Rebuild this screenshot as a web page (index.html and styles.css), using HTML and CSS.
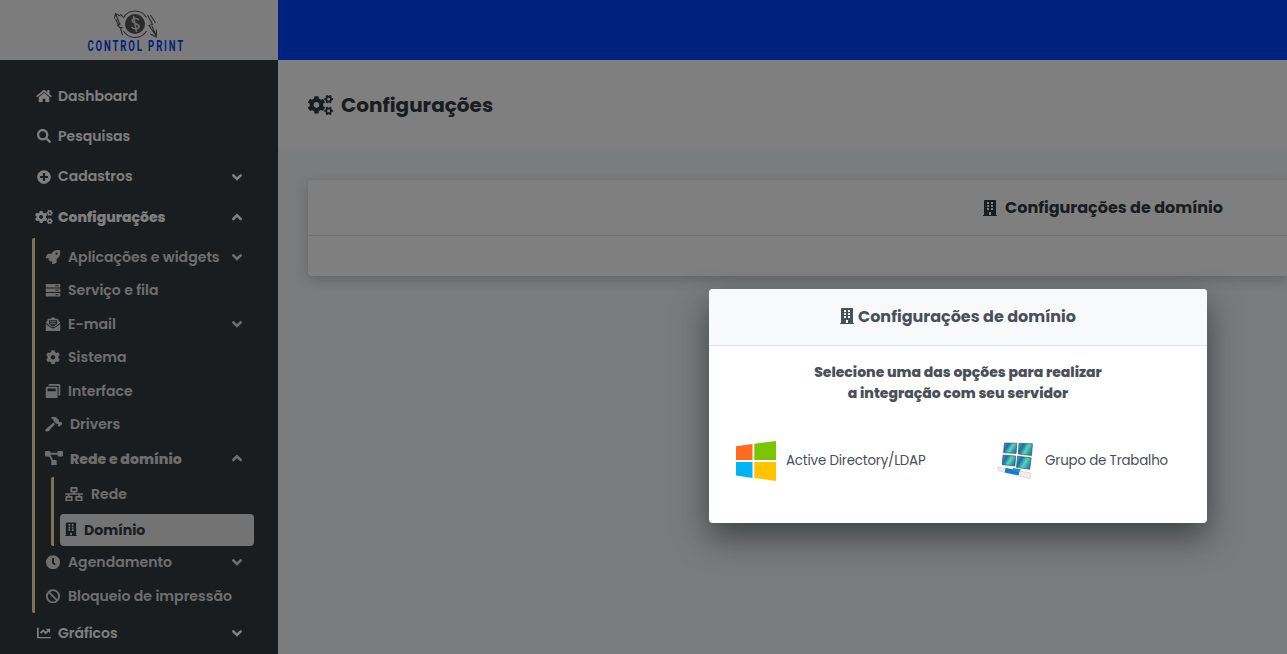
FILE: index.html
```html
<!DOCTYPE html>
<html lang="pt-BR">
<head>
<meta charset="utf-8">
<title>Control Print - Configurações de domínio</title>
<link rel="stylesheet" href="styles.css">
</head>
<body>
<svg class="defs" aria-hidden="true">
  <symbol id="home" viewBox="0 0 576 512"><path d="M280.37 148.26L96 300.11V464a16 16 0 0 0 16 16l112.06-.29a16 16 0 0 0 15.92-16V368a16 16 0 0 1 16-16h64a16 16 0 0 1 16 16v95.64a16 16 0 0 0 16 16.05L464 480a16 16 0 0 0 16-16V300L295.67 148.26a12.19 12.19 0 0 0-15.3 0zM571.6 251.47L488 182.56V44.05a12 12 0 0 0-12-12h-56a12 12 0 0 0-12 12v72.61L318.47 43a48 48 0 0 0-61 0L4.34 251.47a12 12 0 0 0-1.6 16.9l25.5 31A12 12 0 0 0 45.15 301l235.22-193.74a12.19 12.19 0 0 1 15.3 0L530.9 301a12 12 0 0 0 16.9-1.6l25.5-31a12 12 0 0 0-1.7-16.93z"/></symbol>
  <symbol id="search" viewBox="0 0 512 512"><path d="M505 442.7L405.3 343c-4.5-4.5-10.6-7-17-7H372c27.6-35.3 44-79.7 44-128C416 93.1 322.9 0 208 0S0 93.1 0 208s93.1 208 208 208c48.3 0 92.7-16.4 128-44v16.3c0 6.4 2.5 12.5 7 17l99.7 99.7c9.4 9.4 24.6 9.4 33.9 0l28.3-28.3c9.4-9.4 9.4-24.6.1-34zM208 336c-70.7 0-128-57.2-128-128 0-70.7 57.2-128 128-128 70.7 0 128 57.2 128 128 0 70.7-57.2 128-128 128z"/></symbol>
  <symbol id="plus" viewBox="0 0 512 512"><path d="M256 8C119 8 8 119 8 256s111 248 248 248 248-111 248-248S393 8 256 8zm144 276c0 6.6-5.4 12-12 12h-92v92c0 6.6-5.4 12-12 12h-56c-6.6 0-12-5.4-12-12v-92h-92c-6.6 0-12-5.4-12-12v-56c0-6.6 5.4-12 12-12h92v-92c0-6.6 5.4-12 12-12h56c6.6 0 12 5.4 12 12v92h92c6.6 0 12 5.4 12 12v56z"/></symbol>
  <path id="small-gear" d="M512.1 191l-8.2 14.3c-3 5.3-9.4 7.5-15.1 5.4-11.8-4.4-22.6-10.7-32.1-18.6-4.6-3.8-5.8-10.5-2.8-15.7l8.2-14.3c-6.9-8-12.3-17.3-15.9-27.4h-16.5c-6 0-11.2-4.3-12.2-10.3-2-12-2.1-24.6 0-37.1 1-6 6.2-10.4 12.2-10.4h16.5c3.6-10.1 9-19.4 15.9-27.4l-8.2-14.3c-3-5.2-1.9-11.9 2.8-15.7 9.5-7.9 20.4-14.2 32.1-18.6 5.7-2.1 12.1.1 15.1 5.4l8.2 14.3c10.5-1.9 21.2-1.9 31.7 0L552 6.3c3-5.3 9.4-7.5 15.1-5.4 11.8 4.4 22.6 10.7 32.1 18.6 4.6 3.8 5.8 10.5 2.8 15.7l-8.2 14.3c6.9 8 12.3 17.3 15.9 27.4h16.5c6 0 11.2 4.3 12.2 10.3 2 12 2.1 24.6 0 37.1-1 6-6.2 10.4-12.2 10.4h-16.5c-3.6 10.1-9 19.4-15.9 27.4l8.2 14.3c3 5.2 1.9 11.9-2.8 15.7-9.5 7.9-20.4 14.2-32.1 18.6-5.7 2.1-12.1-.1-15.1-5.4l-8.2-14.3c-10.4 1.9-21.2 1.9-31.7 0zm-10.5-58.8c38.5 29.6 82.4-14.3 52.8-52.8-38.5-29.7-82.4 14.3-52.8 52.8z"/>
  <symbol id="cogs" viewBox="0 0 640 512"><use href="#small-gear"/><use href="#small-gear" y="301"/><path d="M386.3 286.1l33.7 16.8c10.1 5.8 14.5 18.1 10.5 29.1-8.9 24.2-26.4 46.4-42.6 65.8-7.4 8.9-20.2 11.1-30.3 5.3l-29.1-16.8c-16 13.7-34.6 24.6-54.9 31.7v33.6c0 11.6-8.3 21.6-19.7 23.6-24.6 4.2-50.4 4.4-75.9 0-11.5-2-20-11.9-20-23.6V418c-20.3-7.2-38.9-18-54.9-31.7L74 403c-10 5.8-22.9 3.6-30.3-5.3-16.2-19.4-33.3-41.6-42.2-65.7-4-10.9.4-23.2 10.5-29.1l33.3-16.8c-3.9-20.9-3.9-42.4 0-63.4L12 205.8c-10.1-5.8-14.6-18.1-10.5-29 8.9-24.2 26-46.4 42.2-65.8 7.4-8.9 20.2-11.1 30.3-5.3l29.1 16.8c16-13.7 34.6-24.6 54.9-31.7V57.1c0-11.5 8.2-21.5 19.6-23.5 24.6-4.2 50.5-4.4 76-.1 11.5 2 20 11.9 20 23.6v33.6c20.3 7.2 38.9 18 54.9 31.7l29.1-16.8c10-5.8 22.9-3.6 30.3 5.3 16.2 19.4 33.2 41.6 42.1 65.8 4 10.9.1 23.2-10 29.1l-33.7 16.8c3.9 21 3.9 42.5 0 63.5zm-117.6 21.1c59.2-77-28.7-164.9-105.7-105.7-59.2 77 28.7 164.9 105.7 105.7z"/></symbol>
  <symbol id="cog" viewBox="0 0 512 512"><path d="M487.4 315.7l-42.6-24.6c4.3-23.2 4.3-47 0-70.2l42.6-24.6c4.9-2.8 7.1-8.6 5.5-14-11.1-35.6-30-67.8-54.7-94.6-3.8-4.1-10-5.1-14.8-2.3L380.8 110c-17.9-15.4-38.5-27.3-60.8-35.1V25.8c0-5.6-3.9-10.5-9.4-11.7-36.7-8.2-74.3-7.8-109.2 0-5.5 1.2-9.4 6.1-9.4 11.7V75c-22.2 7.9-42.8 19.8-60.8 35.1L88.7 85.5c-4.9-2.8-11-1.9-14.8 2.3-24.7 26.7-43.6 58.9-54.7 94.6-1.7 5.4.6 11.2 5.5 14L67.3 221c-4.3 23.2-4.3 47 0 70.2l-42.6 24.6c-4.9 2.8-7.1 8.6-5.5 14 11.1 35.6 30 67.8 54.7 94.6 3.8 4.1 10 5.1 14.8 2.3l42.6-24.6c17.9 15.4 38.5 27.3 60.8 35.1v49.2c0 5.6 3.9 10.5 9.4 11.7 36.7 8.2 74.3 7.8 109.2 0 5.5-1.2 9.4-6.1 9.4-11.7v-49.2c22.2-7.9 42.8-19.8 60.8-35.1l42.6 24.6c4.9 2.8 11 1.9 14.8-2.3 24.7-26.7 43.6-58.9 54.7-94.6 1.5-5.5-.7-11.3-5.6-14.1zM256 336c-44.1 0-80-35.9-80-80s35.9-80 80-80 80 35.9 80 80-35.9 80-80 80z"/></symbol>
  <symbol id="rocket" viewBox="0 0 512 512"><path d="M505.12 19.09c-1.19-5.53-6.66-11-12.21-12.19C460.72 0 435.51 0 410.41 0 307.18 0 245.27 55.2 199.05 128H94.84c-16.35 0-35.56 11.87-42.89 26.48L2.52 253.3A28.4 28.4 0 0 0 0 264a24 24 0 0 0 24 24h103.82l-22.48 22.47c-11.36 11.36-13 32.26 0 45.25l50.9 50.9c11.16 11.19 32.16 13.16 45.28 0L224 384.16V488a24 24 0 0 0 24 24 28.56 28.56 0 0 0 10.7-2.52l98.73-49.39c14.63-7.29 26.51-26.5 26.51-42.86V312.8C456.54 266.5 512 204.4 512 101.7c0-25.2 0-50.4-6.88-82.61zM384 168a40 40 0 1 1 40-40 40 40 0 0 1-40 40z"/></symbol>
  <symbol id="server" viewBox="0 0 512 512"><path fill-rule="evenodd" d="M24 32H488a24 24 0 0 1 24 24v80a24 24 0 0 1-24 24H24a24 24 0 0 1-24-24V56a24 24 0 0 1 24-24zM24 192H488a24 24 0 0 1 24 24v80a24 24 0 0 1-24 24H24a24 24 0 0 1-24-24v-80a24 24 0 0 1 24-24zM24 352H488a24 24 0 0 1 24 24v80a24 24 0 0 1-24 24H24a24 24 0 0 1-24-24v-80a24 24 0 0 1 24-24zM344 80h104v32H344zM344 240h104v32H344zM344 400h104v32H344z"/></symbol>
  <symbol id="mail" viewBox="0 0 512 512"><path d="M0 250l176 124q80 58 160 0l176-124v214a48 48 0 0 1-48 48H48a48 48 0 0 1-48-48z"/><path fill-rule="evenodd" d="M0 206q0-26 20-42l44-34V96a32 32 0 0 1 32-32h72l44-36q44-32 88 0l44 36h72a32 32 0 0 1 32 32v34l44 34q20 16 20 42L336 334q-80 58-160 0zM118 118v128l84 62q54 38 108 0l84-62V118z"/><path d="M160 150h192v36H160zM160 220h192v36H160z"/></symbol>
  <symbol id="windows" viewBox="0 0 512 512"><path fill-rule="evenodd" d="M48 96h320a48 48 0 0 1 48 48v320a48 48 0 0 1-48 48H48a48 48 0 0 1-48-48V144a48 48 0 0 1 48-48zM64 160v96h288v-96z"/><path d="M464 0H144a48 48 0 0 0-48 48v16h64v-4h292v292h-4v64h16a48 48 0 0 0 48-48V48a48 48 0 0 0-48-48z"/></symbol>
  <symbol id="hammer" viewBox="0 0 576 512"><path d="M571 193l-23-22c-9-9-24-9-34 0l-11 11-24-23c8-26 3-48-14-66L409 36C346-24 247-24 190 38l98 49v20c0 25 10 50 28 68l54 54c21 16 42 20 69 14l23 22-12 12c-9 9-9 24 0 34l23 22c9 9 24 9 34 0l91-91c9-9 9-24 0-34zM304 210c-5-5-8-11-12-17L20 428c-26 23-27 63-2 88 25 24 65 22 88-4l236-265c-6-4-10-7-15-12z"/></symbol>
  <symbol id="diagram" viewBox="0 0 640 512"><path d="M32 0h128a32 32 0 0 1 32 32v32h256V32a32 32 0 0 1 32-32h128a32 32 0 0 1 32 32v128a32 32 0 0 1-32 32H480a32 32 0 0 1-32-32v-32H192v20l98 172h94a32 32 0 0 1 32 32v128a32 32 0 0 1-32 32H256a32 32 0 0 1-32-32V352l1-18-82-142H32a32 32 0 0 1-32-32V32A32 32 0 0 1 32 0z"/></symbol>
  <symbol id="network" viewBox="0 0 640 512"><path fill-rule="evenodd" d="M224 0h192a32 32 0 0 1 32 32v128a32 32 0 0 1-32 32h-64v32h272a16 16 0 0 1 16 16v32H544v48h48a32 32 0 0 1 32 32v128a32 32 0 0 1-32 32H400a32 32 0 0 1-32-32V352a32 32 0 0 1 32-32h80v-48H160v48h80a32 32 0 0 1 32 32v128a32 32 0 0 1-32 32H48a32 32 0 0 1-32-32V352a32 32 0 0 1 32-32h48v-48H0v-32a16 16 0 0 1 16-16h272v-32h-64a32 32 0 0 1-32-32V32a32 32 0 0 1 32-32zM256 64v64h128V64zM80 384v64h128v-64zM432 384v64h128v-64z"/></symbol>
  <symbol id="building" viewBox="0 0 448 512"><path fill-rule="evenodd" d="M56 0h336a24 24 0 0 1 24 24v456h12a20 20 0 0 1 20 20v12H0v-12a20 20 0 0 1 20-20h12V24A24 24 0 0 1 56 0zM128 64v64h64V64zM256 64v64h64V64zM128 160v64h64v-64zM256 160v64h64v-64zM128 256v64h64v-64zM256 256v64h64v-64zM192 384v96h64v-96z"/></symbol>
  <symbol id="clock" viewBox="0 0 512 512"><path fill-rule="evenodd" d="M256 8a248 248 0 1 0 0 496 248 248 0 1 0 0-496zM224 104h64v164l64 48-36 50-92-68z"/></symbol>
  <symbol id="ban" viewBox="0 0 512 512"><g fill="none" stroke="currentColor" stroke-width="66"><circle cx="256" cy="256" r="215"/><path d="M104 104l304 304"/></g></symbol>
  <symbol id="chart" viewBox="0 0 512 512"><path d="M64 64v336h432a16 16 0 0 1 16 16v32H32a32 32 0 0 1-32-32V80a16 16 0 0 1 16-16zM352 96h112a16 16 0 0 1 16 16v112c0 18-20 24-30 14l-32-30-100 96-94-94-74 72-44-44 118-118 94 94 56-56-32-32c-10-10-6-30 10-30z"/></symbol>
  <symbol id="down" viewBox="0 0 12 12"><path d="M2.300 4.300L6 8l3.700-3.700" fill="none" stroke="currentColor" stroke-width="2.600" stroke-linecap="round"/></symbol>
  <symbol id="up" viewBox="0 0 12 12"><path d="M2.300 8L6 4.300 9.700 8" fill="none" stroke="currentColor" stroke-width="2.600" stroke-linecap="round"/></symbol>
</svg>

<div class="app">
  <aside class="sidebar">
    <a class="brand">
      <svg class="logo" viewBox="0 0 100 46" role="img" aria-label="Control Print">
        <g fill="none" stroke="#565656" stroke-width="1.100">
          <path d="M37.500 9.500A13.500 13.500 0 0 1 60.500 9.500M37.500 23A13.500 13.500 0 0 0 60.500 23"/>
          <path d="M28.500 10.500L29.500 5.500 34.500 8M29.800 6L34 17M31 18l3.500-2.500M29.500 11l4 8.500h3l-2 1 2 6.500M34.500 6l3.500 4M61.500 7l5 9.500-3.500 1 7.500 11M64.500 7l5 8M66 18l4.500 10.500M70.500 21.500l-.200 7.500-6-3"/>
        </g>
        <circle cx="49" cy="16" r="10" fill="#555"/>
        <path d="M53 12.200c-1.500-2.600-7.200-2.200-6.700.9.500 2.500 6.500 2.300 6.800 5.200.2 3-5.800 3.500-7.500.5M47.500 8l3 16" fill="none" stroke="#ddd" stroke-width="1.500"/>
        <text class="logo-text" transform="translate(1.500 42.500) scale(.66 1)" textLength="145" lengthAdjust="spacing">CONTROL PRINT</text>
      </svg>
    </a>
    <nav class="menu">
      <a class="item"><svg class="ico"><use href="#home"/></svg><span>Dashboard</span></a>
      <a class="item"><svg class="ico"><use href="#search"/></svg><span>Pesquisas</span></a>
      <a class="item"><svg class="ico"><use href="#plus"/></svg><span>Cadastros</span><svg class="arrow"><use href="#down"/></svg></a>
      <a class="item open"><svg class="ico wide"><use href="#cogs"/></svg><span>Configurações</span><svg class="arrow"><use href="#up"/></svg></a>
      <div class="submenu">
        <a class="item"><svg class="ico"><use href="#rocket"/></svg><span>Aplicações e widgets</span><svg class="arrow"><use href="#down"/></svg></a>
        <a class="item"><svg class="ico"><use href="#server"/></svg><span>Serviço e fila</span></a>
        <a class="item"><svg class="ico"><use href="#mail"/></svg><span>E-mail</span><svg class="arrow"><use href="#down"/></svg></a>
        <a class="item"><svg class="ico"><use href="#cog"/></svg><span>Sistema</span></a>
        <a class="item"><svg class="ico"><use href="#windows"/></svg><span>Interface</span></a>
        <a class="item"><svg class="ico hammer"><use href="#hammer"/></svg><span>Drivers</span></a>
        <a class="item open"><svg class="ico wide"><use href="#diagram"/></svg><span>Rede e domínio</span><svg class="arrow"><use href="#up"/></svg></a>
        <div class="submenu nested">
          <a class="item"><svg class="ico wide"><use href="#network"/></svg><span>Rede</span></a>
          <a class="item active"><svg class="ico"><use href="#building"/></svg><span>Domínio</span></a>
        </div>
        <a class="item"><svg class="ico"><use href="#clock"/></svg><span>Agendamento</span><svg class="arrow"><use href="#down"/></svg></a>
        <a class="item"><svg class="ico"><use href="#ban"/></svg><span>Bloqueio de impressão</span></a>
      </div>
      <a class="item last"><svg class="ico"><use href="#chart"/></svg><span>Gráficos</span><svg class="arrow"><use href="#down"/></svg></a>
    </nav>
  </aside>
  <main class="main">
    <header class="topbar"></header>
    <div class="page-head"><svg class="head-ico"><use href="#cogs"/></svg><h1>Configurações</h1></div>
    <section class="content">
      <div class="card">
        <div class="card-head"><svg class="bld"><use href="#building"/></svg><h2>Configurações de domínio</h2></div>
        <div class="card-body"></div>
      </div>
    </section>
  </main>
</div>

<div class="backdrop">
  <div class="modal">
    <div class="modal-head"><svg class="bld"><use href="#building"/></svg><h2>Configurações de domínio</h2></div>
    <p class="lead">Selecione uma das opções para realizar<br>a integração com seu servidor</p>
    <div class="options">
      <a class="option">
        <svg class="opt-ico" viewBox="0 0 40 40"><path fill="#ff6a22" d="M0 5.300L16.500 3v16H0z"/><path fill="#7ac400" d="M18.300 2.800L40 0v19H18.300z"/><path fill="#00b3f4" d="M0 21h16.500v16L0 34.500z"/><path fill="#ffc400" d="M18.300 21H40v19l-21.700-3z"/></svg>
        <span>Active Directory/LDAP</span>
      </a>
      <a class="option">
        <svg class="opt-ico" viewBox="0 0 40 40">
          <defs><linearGradient id="scr" x1="0" y1="0" x2="1" y2=".5"><stop offset="0" stop-color="#3cb4dc"/><stop offset=".35" stop-color="#1f6ca6"/><stop offset=".65" stop-color="#55d8b4"/><stop offset="1" stop-color="#1f86b8"/></linearGradient></defs>
          <path d="M2.500 26l33.500 6-1 5.800-31.500-7.800z" fill="#eceaf4" stroke="#c3c1d0" stroke-width=".5"/>
          <g stroke="#38454f" stroke-width=".6"><path fill="url(#scr)" d="M9.500 2l12.300.2-.7 10.200-12.600-.7z"/><path fill="url(#scr)" d="M24 2.200l13.500.6-1 11.700-13.200-1.500z"/><path fill="url(#scr)" d="M8 14l12.700 1-.8 10-12.700-1.300z"/><path fill="url(#scr)" d="M22.500 15.200l13.700 1.600-1.500 11.500-13.200-2z"/></g>
          <path d="M10.500 27l14 2.500-.8 4.800-14-2.800z" fill="#137ccb"/><path d="M18 27l8 1.200-2 2.800-6-1z" fill="#1a8fd6"/>
        </svg>
        <span>Grupo de Trabalho</span>
      </a>
    </div>
  </div>
</div>
</body>
</html>
```
FILE: styles.css
```css
* { box-sizing: border-box; }
body { margin: 0; height: 654px; overflow: hidden; font-family: Poppins, Inter, "Open Sans", sans-serif; font-size: 14px; color: #343a40; background: #f4f6f9; }
h1, h2, p { margin: 0; }
svg { flex: none; fill: currentColor; }
.defs { display: none; }
.app { display: flex; height: 654px; overflow: hidden; }

.sidebar { width: 278px; flex: none; background: #343a40; color: #fff; }
.brand { display: flex; justify-content: center; height: 60px; padding-top: 8px; background: #f8f9fa; }
.logo { width: 100px; height: 46px; margin-right: 6px; }
.logo-text { font: bold 14.500px Roboto, sans-serif; fill: #0044ff; }
.menu { padding: 16px 24px 0 32px; }
.item { display: flex; align-items: center; height: 40.300px; padding-left: 4px; font-weight: 600; white-space: nowrap; }
.ico { width: 16px; height: 14px; margin-right: 6px; }
.ico.wide { width: 18px; margin-left: -1px; margin-right: 5px; }
.arrow { width: 12px; height: 12px; margin-left: auto; margin-right: 11px; }
.open { font-weight: 800; }
.last span { padding-top: 1px; }
.submenu { margin-top: 1px; padding: 2px 0 0; border-left: 3px solid #ffe6aa; border-radius: 2px; color: #dcdcde; font-size: 14.100px; }
.submenu .item { height: 33.500px; padding-left: 10px; }
.submenu span { padding-top: 1px; }
.submenu .open span { padding-top: 3px; }
.submenu .ico { height: 14.500px; margin-right: 7px; }
.submenu .ico.wide { width: 18px; margin-left: 0; }
.submenu .ico.hammer { width: 17px; margin-right: 8px; }
.submenu.nested { margin: 2px 0 0 16px; padding: 0 0 0 6px; }
.submenu.nested .item { height: 35px; padding-left: 5px; }
.submenu.nested .wide { margin-right: 8px; }
.submenu.nested .active { height: 32px; margin-top: 2px; background: #e6e6e6; border-radius: 4px; color: #343a40; font-weight: 700; }
.submenu.nested .active .ico { width: 12px; margin-right: 7px; }

.main { flex: 1; min-width: 0; display: flex; flex-direction: column; }
.topbar { height: 60px; background: #0044ff; }
.page-head { display: flex; gap: 8px; height: 90px; padding-left: 30px; align-items: center; background: #fff; }
.head-ico { width: 25px; height: 20px; }
h1 { font-size: 20px; font-weight: 700; }
.content { flex: 1; padding: 30px 0 0 30px; background: #f4f6f9; }
.card { background: #fff; border-radius: 4px 0 0 4px; box-shadow: 0 4px 12px rgba(0, 0, 0, .18); }
.card-head { display: flex; align-items: center; height: 56px; gap: 8px; padding-left: 675px; border-bottom: 1px solid #e3e4e6; }
.card-body { height: 40px; }
.bld { width: 14px; height: 16px; }
h2 { font-size: 16px; font-weight: 700; white-space: nowrap; }

.backdrop { position: absolute; inset: 0; padding: 289px 0 0 709px; background: rgba(0, 0, 0, .5); }
.modal { width: 498px; height: 234px; background: #fff; border-radius: 4px; color: #495057; box-shadow: 0 14px 32px rgba(20, 32, 32, .6); overflow: hidden; }
.modal-head { display: flex; align-items: center; justify-content: center; gap: 4px; height: 57px; padding-bottom: 2px; background: #f8f9fb; border-bottom: 1px solid #e3e4e6; }
.lead { padding-top: 16px; font-weight: 800; font-size: 14px; line-height: 21px; text-align: center; }
.options { display: flex; justify-content: space-between; padding: 37px 39px 0 27px; }
.option { display: flex; align-items: center; gap: 10px; font-size: 13.400px; letter-spacing: -.18px; white-space: nowrap; }
.opt-ico { width: 40px; height: 40px; }
```
